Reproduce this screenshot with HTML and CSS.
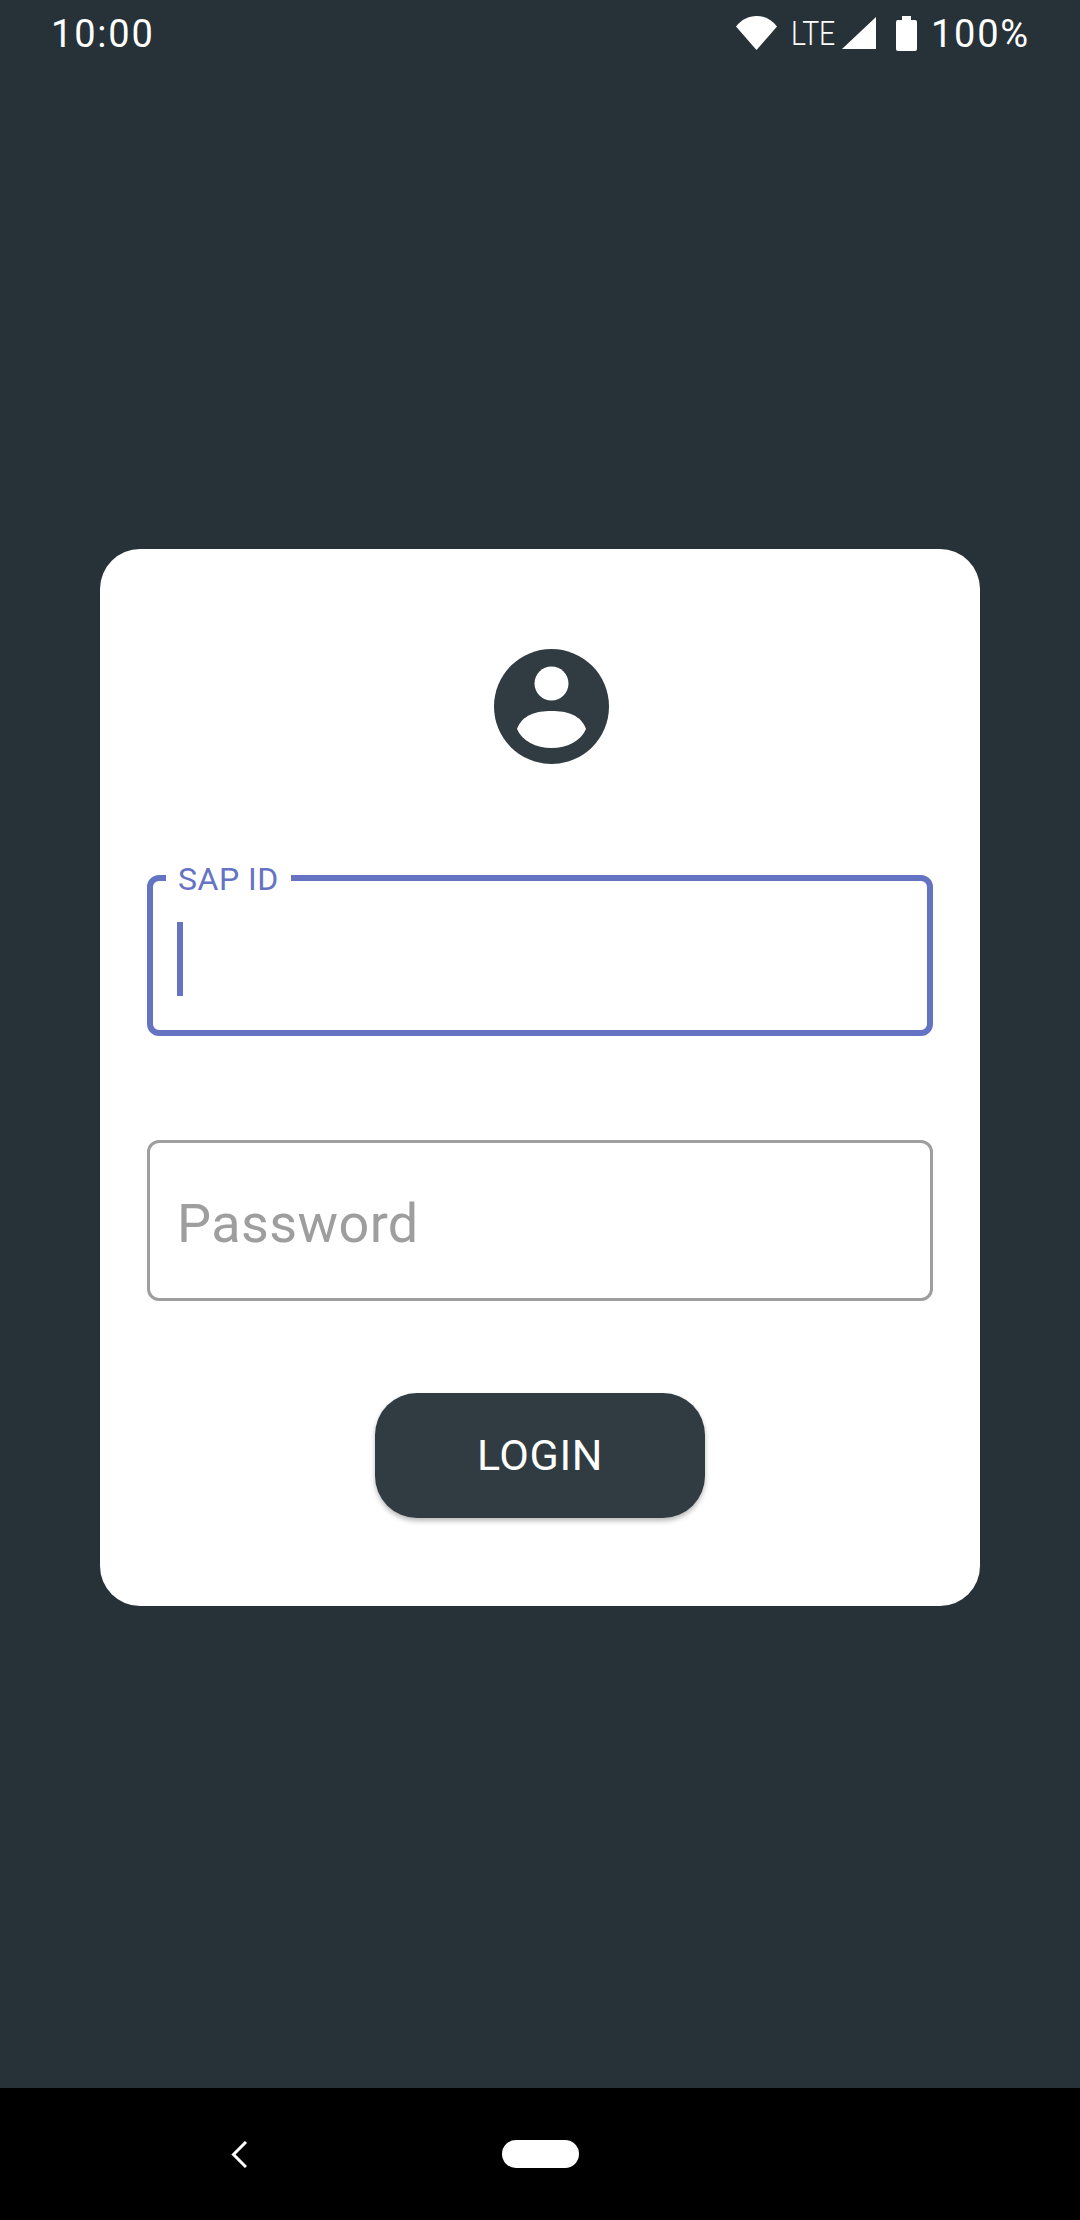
FILE: index.html
```html
<!DOCTYPE html>
<html lang="en">
<head>
<meta charset="utf-8">
<title>Login</title>
<link rel="stylesheet" href="styles.css">
</head>
<body>
<div class="screen">
  <header class="status">
    <span class="clock">10:00</span>
    <div class="status-right">
      <svg class="wifi" width="41" height="34" viewBox="0 0 41 34"><path d="M0 10.500C5.500 3.500 12.500 0 20.500 0S35.500 3.500 41 10.500L20.500 34Z" fill="#fff"/></svg>
      <span class="lte">LTE</span>
      <svg class="signal" width="34" height="32" viewBox="0 0 34 32"><path d="M34 0V32H0Z" fill="#fff"/></svg>
      <svg class="battery" width="21" height="35" viewBox="0 0 21 35"><path d="M6 0H15V4H19Q21 4 21 6V33Q21 35 19 35H2Q0 35 0 33V6Q0 4 2 4H6Z" fill="#fff"/></svg>
      <span class="percent">100%</span>
    </div>
  </header>
  <main class="content">
    <section class="card">
      <svg class="avatar" width="115" height="115" viewBox="0 0 115 115">
        <circle cx="57.500" cy="57.500" r="57.500" fill="#303b42"/>
        <circle cx="57.500" cy="34.500" r="17" fill="#fff"/>
        <path d="M23 80C28 66 42 62 57.500 62S87 66 92 80C87 92 73 99 57.500 99S28 92 23 80Z" fill="#fff"/>
      </svg>
      <div class="field field-focus">
        <span class="field-label">SAP ID</span>
        <span class="caret"></span>
      </div>
      <div class="field field-idle">
        <span class="placeholder">Password</span>
      </div>
      <button class="login" type="button">LOGIN</button>
    </section>
  </main>
  <nav class="navbar">
    <svg class="back" width="16" height="27" viewBox="0 0 16 27"><path d="M15 1L2.500 13.500L15 26" fill="none" stroke="#fff" stroke-width="3"/></svg>
    <span class="home"></span>
  </nav>
</div>
</body>
</html>
```
FILE: styles.css
```css
* {
  box-sizing: border-box;
}

html,
body {
  margin: 0;
  padding: 0;
}

body {
  font-family: Roboto, "Liberation Sans", sans-serif;
  background: #263238;
}

.screen {
  width: 1080px;
  height: 2220px;
  display: flex;
  flex-direction: column;
  overflow: hidden;
}

.status {
  height: 66px;
  flex: none;
  display: flex;
  align-items: center;
  justify-content: space-between;
  padding: 0 50px 0 51px;
  color: #fff;
}

.clock {
  font-size: 38px;
  line-height: 1;
  letter-spacing: 1.8px;
  padding-top: 2px;
}

.status-right {
  display: flex;
  align-items: center;
}

.wifi {
  display: block;
}

.lte {
  display: block;
  width: 44px;
  margin-left: 14px;
  font-size: 33px;
  font-weight: 300;
  line-height: 1;
  transform: scaleX(0.86);
  transform-origin: left center;
  white-space: nowrap;
}

.signal {
  display: block;
  margin-left: 7px;
}

.battery {
  display: block;
  margin-left: 20px;
}

.percent {
  margin-left: 14px;
  font-size: 38px;
  line-height: 1;
  letter-spacing: 1.8px;
  padding-top: 2px;
}

.content {
  flex: 1;
  display: flex;
  align-items: center;
  justify-content: center;
}

.card {
  width: 880px;
  height: 1057px;
  background: #fff;
  border-radius: 40px;
  padding: 100px 47px 88px;
  display: flex;
  flex-direction: column;
  align-items: center;
}

.avatar {
  display: block;
  flex: none;
  margin-left: 22px;
}

.field {
  position: relative;
  width: 786px;
  height: 161px;
  flex: none;
  display: flex;
  align-items: center;
  border-radius: 12px;
  padding: 7px 0 0 24px;
}

.field-focus {
  margin-top: 111px;
  border: 6px solid #6573c3;
}

.field-idle {
  margin-top: 104px;
  border: 3px solid #9e9e9e;
  padding-left: 27px;
}

.field-label {
  position: absolute;
  left: 13px;
  top: -21px;
  padding: 0 12px;
  background: #fff;
  color: #6573c3;
  font-size: 32px;
  letter-spacing: 0.5px;
  line-height: 38px;
}

.caret {
  display: block;
  width: 6px;
  height: 74px;
}

.field-focus .caret {
  background: #6573c3;
}

.placeholder {
  font-size: 54px;
  letter-spacing: 0.4px;
  line-height: 64px;
  color: #9e9e9e;
}

.login {
  display: block;
  flex: none;
  margin-top: 92px;
  width: 330px;
  height: 125px;
  border: 0;
  border-radius: 42px;
  background: #303b42;
  color: #fff;
  font-family: inherit;
  font-size: 43px;
  letter-spacing: 0.6px;
  padding: 0;
  box-shadow: 0 3px 5px rgba(0, 0, 0, 0.28);
}

.navbar {
  height: 132px;
  flex: none;
  background: #000;
  display: flex;
  align-items: center;
  gap: 255px;
  padding-left: 231px;
}

.back {
  display: block;
}

.home {
  display: block;
  width: 77px;
  height: 28px;
  border-radius: 14px;
  background: #fff;
}
```
